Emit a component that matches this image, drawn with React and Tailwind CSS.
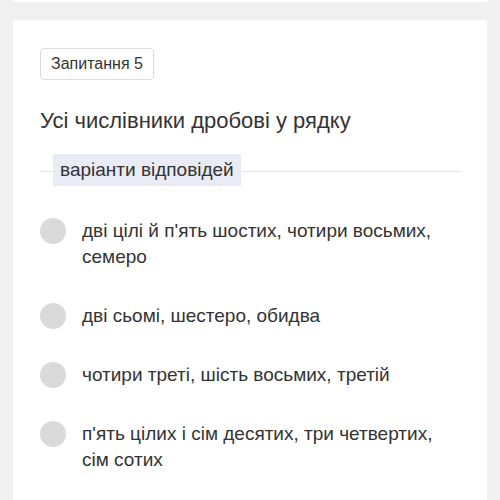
const options = [
  "дві цілі й п'ять шостих, чотири восьмих, семеро",
  "дві сьомі, шестеро, обидва",
  "чотири треті, шість восьмих, третій",
  "п'ять цілих і сім десятих, три четвертих, сім сотих",
];

const App = () => {
  return (
    <div
      className="min-h-[500px] bg-[#f0f0f0] px-[13px] text-[#333]"
      style={{ fontFamily: '"Liberation Sans", Arial, sans-serif' }}
    >
      {/* end of previous card */}
      <div className="h-[2px] bg-white" />

      <div className="mt-[18px] min-h-[480px] bg-white pl-[27px] pr-[27px] pt-[28px] pb-10">
        <div className="inline-block rounded-[4px] border border-[#dcdcdc] px-[10px] text-[16px] leading-[30px]">
          Запитання 5
        </div>

        <h2 className="mt-[27px] text-[22px] leading-[28px] font-normal">
          Усі числівники дробові у рядку
        </h2>

        <div className="relative mt-[19px] h-[32px]">
          <div className="absolute left-0 right-0 top-[17px] h-px bg-[#e4e4e4]" />
          <span className="absolute left-[13px] top-0 bg-[#e9ebf5] px-[7px] text-[19px] leading-[32px]">
            варіанти відповідей
          </span>
        </div>

        <div className="mt-[32px] flex flex-col gap-[33px]">
          {options.map((text) => (
            <label key={text} className="flex items-start gap-[16px]">
              <span className="h-[26px] w-[26px] shrink-0 rounded-full bg-[#dadada]" />
              <span className="text-[19px] leading-[26px]">{text}</span>
            </label>
          ))}
        </div>
      </div>
    </div>
  );
};

export default App;
